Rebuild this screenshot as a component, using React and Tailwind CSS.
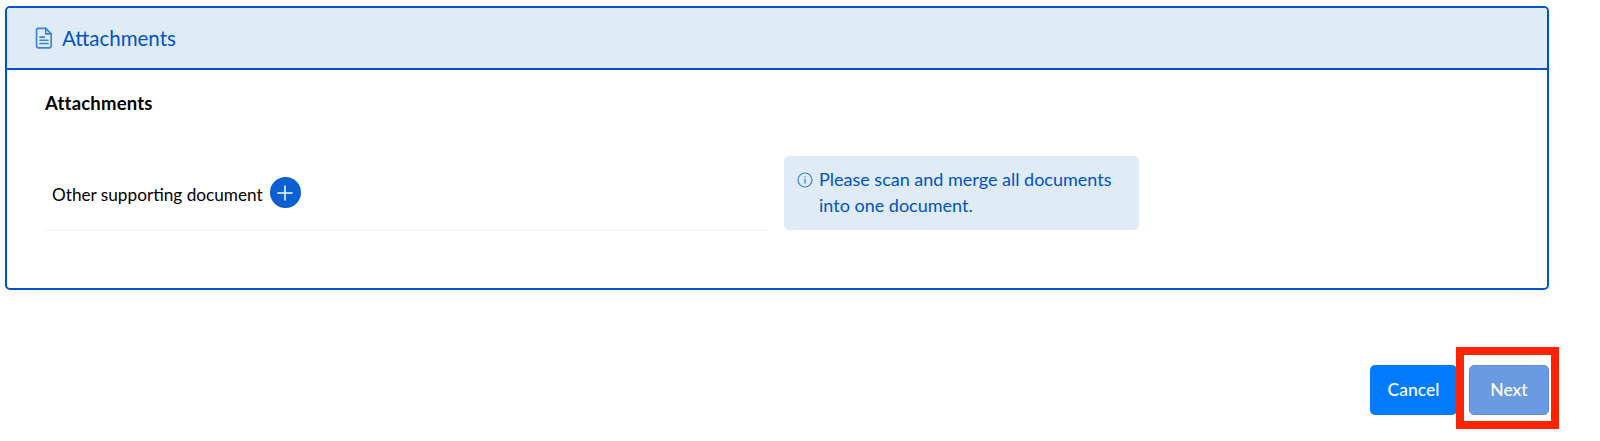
import { Plus } from 'lucide-react';

function FileIcon() {
  return (
    <svg width="18" height="22" viewBox="0 0 20 24" fill="none" stroke="#3f7fdc" strokeWidth="1.8" strokeLinejoin="round" strokeLinecap="round" preserveAspectRatio="none">
      <path d="M3.5 1.5h8.5l6 6v13.5a1.8 1.8 0 0 1-1.8 1.8H3.5a1.8 1.8 0 0 1-1.8-1.8V3.3a1.8 1.8 0 0 1 1.8-1.8z" />
      <path d="M12 1.5v6h6" />
      <path d="M5.5 11h5M5.5 14.5h9M5.5 18h9" />
    </svg>
  );
}

function InfoIcon() {
  return (
    <svg width="16" height="16" viewBox="0 0 16 16" fill="none" stroke="#3f7fdc" strokeWidth="1.2" strokeLinecap="round">
      <circle cx="8" cy="8" r="7" />
      <path d="M8 7.2v4" />
      <path d="M8 4.7v.3" />
    </svg>
  );
}

export default function App() {
  return (
    <div className="relative h-[441px] w-[1600px] overflow-hidden bg-white font-['Lato','Noto_Sans',sans-serif]">
      <div className="pl-[5px] pt-[6px]">
        <div className="h-[284px] w-[1544px] overflow-hidden rounded-[5px] border-2 border-[#0052cc] shadow-[0_4px_10px_rgba(0,0,0,0.04)]">
          <div className="flex h-[62px] items-center gap-[9px] border-b-2 border-[#0052cc] bg-[#dfecf8] pl-[28px] text-[20.5px] text-[#0052cc]">
            <FileIcon />
            <span>Attachments</span>
          </div>
          <div className="pl-[38px] pt-[21px]">
            <h2 className="text-[18.5px] font-bold leading-[24px] tracking-[0.2px] text-black">Attachments</h2>
            <div className="mt-[41px] flex items-start gap-[15px]">
              <div className="flex h-[75px] w-[724px] items-start gap-[7px] border-b border-[#f2f2f2] pl-[7px] pt-[21px]">
                <span className="mt-[2px] text-[17.2px] leading-[32px] text-black">Other supporting document</span>
                <span className="flex h-[31px] w-[31px] items-center justify-center rounded-full bg-[#0a5fd1]">
                  <Plus size={24} color="white" strokeWidth={1.5} />
                </span>
              </div>
              <div className="flex h-[74px] w-[355px] gap-[6px] rounded-[5px] bg-[#dfecf8] pl-[13px] pt-[10px] text-[18px] leading-[26px] text-[#0052cc]">
                <span className="mt-[6px] shrink-0"><InfoIcon /></span>
                <p>Please scan and merge all documents<br />into one document.</p>
              </div>
            </div>
          </div>
        </div>
      </div>

      <div className="mt-[75px] flex justify-end pr-[51px]">
        <button className="h-[50px] w-[87px] rounded-[5px] bg-[#007bff] text-[17.5px] font-medium text-white">Cancel</button>
        <button className="ml-[12px] h-[50px] w-[80px] rounded-[5px] border border-[#5b8fdc] bg-[#6a9ae2] text-[17.5px] font-medium text-white">Next</button>
      </div>

      {/* red annotation around the Next button */}
      <div className="absolute left-[1456px] top-[347px] h-[82px] w-[103px] border-[8px] border-[#ff2200]" />
    </div>
  );
}
